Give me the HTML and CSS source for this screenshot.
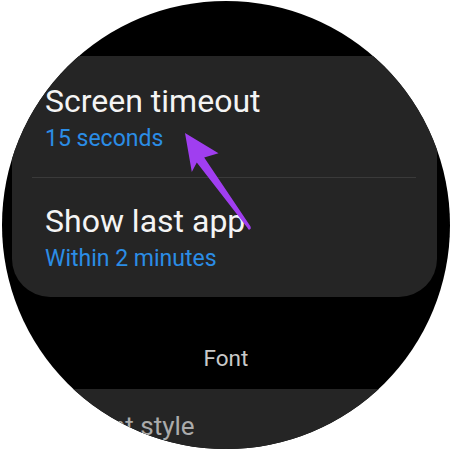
FILE: index.html
```html
<!DOCTYPE html>
<html>
<head>
<meta charset="utf-8">
<link rel="stylesheet" href="styles.css">
</head>
<body>
<div class="watch">
  <div class="card">
    <div class="item">
      <div class="title">Screen timeout</div>
      <div class="sub">15 seconds</div>
    </div>
    <div class="divider"></div>
    <div class="item">
      <div class="title">Show last app</div>
      <div class="sub">Within 2 minutes</div>
    </div>
  </div>
  <div class="section">Font</div>
  <div class="card card2">
    <div class="title2">Font style</div>
  </div>
</div>
<svg class="arrow" width="450" height="450" viewBox="0 0 450 450">
  <path d="M185 133 L218.5 153.3 L204.2 157.4 L250.4 226.3 Q251.5 229 249.6 229.6 Q248 229.9 247.6 228 L196.8 162.6 L191.8 172 Z" fill="#a03ef0"/>
</svg>
</body>
</html>
```
FILE: styles.css
```css
html, body {
  margin: 0;
  padding: 0;
  background: #ffffff;
}
body {
  position: relative;
  width: 450px;
  height: 450px;
  overflow: hidden;
  font-family: Roboto, "Liberation Sans", sans-serif;
}
.watch {
  width: 448px;
  height: 448px;
  margin: 1px 0 0 2px;
  border-radius: 50%;
  overflow: hidden;
  background: #000000;
  padding-top: 55px;
  box-sizing: border-box;
}
.card {
  margin: 0 13px 0 10px;
  background: #252525;
  border-radius: 38px;
  padding: 2px 0 0;
}
.item {
  padding: 24px 0 24px 33px;
}
.title {
  font-size: 32px;
  line-height: 38px;
  color: #f4f4f4;
  white-space: nowrap;
}
.sub {
  margin-top: 5px;
  font-size: 23px;
  line-height: 28px;
  color: #2b8de6;
  white-space: nowrap;
}
.divider {
  height: 1px;
  background: #3a3a3a;
  margin: 0 21px 0 20px;
}
.section {
  padding: 48px 0 18px;
  text-align: center;
  font-size: 22.5px;
  line-height: 26px;
  color: #c9c9c9;
}
.card2 {
  padding: 22px 0 40px 70px;
  border-radius: 38px;
}
.title2 {
  font-size: 26px;
  line-height: 30px;
  color: #ababab;
  white-space: nowrap;
}
.arrow {
  position: absolute;
  left: 0;
  top: 0;
}
```
